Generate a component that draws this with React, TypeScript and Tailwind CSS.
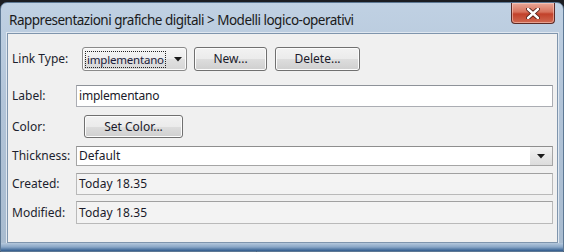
import React from "react";

const font = { fontFamily: '"Noto Sans", "Open Sans", sans-serif' };

function Arrow({ className = "" }: { className?: string }) {
  return (
    <svg width="8" height="5" viewBox="0 0 8 5" className={className}>
      <path d="M0 0 H8 L4 4.5 Z" fill="#1a1a1a" />
    </svg>
  );
}

function WinButton({ children, className = "" }: { children: React.ReactNode; className?: string }) {
  return (
    <div
      className={`flex items-center justify-center rounded-[3px] border border-[#707070] text-[12px] text-[#1a1a2a] shadow-[inset_0_0_0_1px_#fcfcfc] bg-[linear-gradient(#f2f2f2_0%,#ebebeb_50%,#dddddd_51%,#cfcfcf_100%)] ${className}`}
    >
      {children}
    </div>
  );
}

function Label({ children }: { children: React.ReactNode }) {
  return <div className="w-[64px] shrink-0 text-[12px] text-[#1c1f2e]">{children}</div>;
}

export default function App() {
  return (
    <div className="w-[564px] h-[252px] bg-[#1b1d22] overflow-hidden" style={font}>
      <div className="mt-[2px] h-[250px] rounded-t-[7px] border border-[#5d7894] bg-[linear-gradient(180deg,#c0d1e3_0%,#b2c4d8_40%,#a8bbcf_100%)] flex flex-col">
        <div className="h-[30px] flex items-start justify-between">
          <div className="pl-[8px] pt-[9px] text-[13.5px] leading-[17px] tracking-[-0.5px] text-[#1a1a1a]">
            Rappresentazioni grafiche digitali &gt; Modelli logico-operativi
          </div>
          <div className="mr-[8px] mt-[0px] w-[44px] h-[21px] rounded-b-[4px] border border-[#5b2a26] border-t-0 bg-[linear-gradient(180deg,#e9a898_0%,#d7725c_45%,#c2412a_55%,#d06a52_100%)] flex items-center justify-center shadow-[inset_0_0_0_1px_rgba(255,220,210,0.5)]">
            <svg width="14" height="11" viewBox="0 0 14 11">
              <path d="M2 1 L12 10 M12 1 L2 10" stroke="#4a1a14" strokeWidth="4.2" strokeLinecap="round" />
              <path d="M2 1 L12 10 M12 1 L2 10" stroke="#ffffff" strokeWidth="2.4" strokeLinecap="round" />
            </svg>
          </div>
        </div>
        <div className="ml-[6px] mr-[5px] h-[210px] border border-[#7f95ad] bg-[#f0f0f0] shadow-[0_0_0_1px_#dfe7f0] flex flex-col pl-[4px] pr-[4px]">
          <div className="mt-[13px] h-[24px] flex items-center">
            <Label>Link Type:</Label>
            <div className="ml-[6px] w-[105px] h-[24px] rounded-[3px] border border-[#8a8a8a] bg-[linear-gradient(#f6f6f6_0%,#ececec_50%,#e0e0e0_51%,#d6d6d6_100%)] shadow-[inset_0_0_0_1px_#fbfbfb] flex items-center pl-[2px]">
              <div className="h-[17px] px-[1px] border border-dotted border-[#222] text-[11.5px] leading-[15px] tracking-[-0.2px] text-[#1a1a3a]">
                implementano
              </div>
              <Arrow className="ml-[8px]" />
            </div>
            <WinButton className="ml-[7px] w-[73px] h-[24px]">New...</WinButton>
            <WinButton className="ml-[8px] w-[85px] h-[24px]">Delete...</WinButton>
          </div>
          <div className="mt-[14px] h-[22px] flex items-center">
            <Label>Label:</Label>
            <div className="flex-1 h-[22px] border border-[#abadb3] border-t-[#8e9299] bg-white flex items-center pl-[2px] text-[12px] tracking-[-0.2px] text-[#1a1a2a]">
              implementano
            </div>
          </div>
          <div className="mt-[8px] h-[23px] flex items-center">
            <Label>Color:</Label>
            <WinButton className="ml-[8px] w-[99px] h-[23px]">Set Color...</WinButton>
          </div>
          <div className="mt-[8px] h-[20px] flex items-center">
            <Label>Thickness:</Label>
            <div className="flex-1 h-[20px] border border-[#a5a5a5] border-t-[#8e8e8e] bg-white flex items-center text-[12px] text-[#1a1a2a]">
              <div className="flex-1 pl-[2px]">Default</div>
              <div className="w-[22px] h-full bg-[linear-gradient(#f3f3f3,#dcdcdc)] flex items-center justify-center">
                <Arrow />
              </div>
            </div>
          </div>
          <div className="mt-[7px] h-[22px] flex items-center">
            <Label>Created:</Label>
            <div className="flex-1 h-[22px] border border-[#b9b9b9] border-t-[#a0a0a0] bg-[#f3f3f3] flex items-center pl-[2px] text-[12px] tracking-[0.1px] text-[#1a1a2a]">
              Today 18.35
            </div>
          </div>
          <div className="mt-[6px] h-[23px] flex items-center">
            <Label>Modified:</Label>
            <div className="flex-1 h-[23px] border border-[#b9b9b9] border-t-[#a0a0a0] bg-[#f3f3f3] flex items-center pl-[2px] text-[12px] tracking-[0.1px] text-[#1a1a2a]">
              Today 18.35
            </div>
          </div>
        </div>
        <div className="flex-1 bg-[linear-gradient(180deg,#b5c8dc_0%,#8aa7c7_50%,#2f5a8c_100%)]" />
      </div>
    </div>
  );
}
